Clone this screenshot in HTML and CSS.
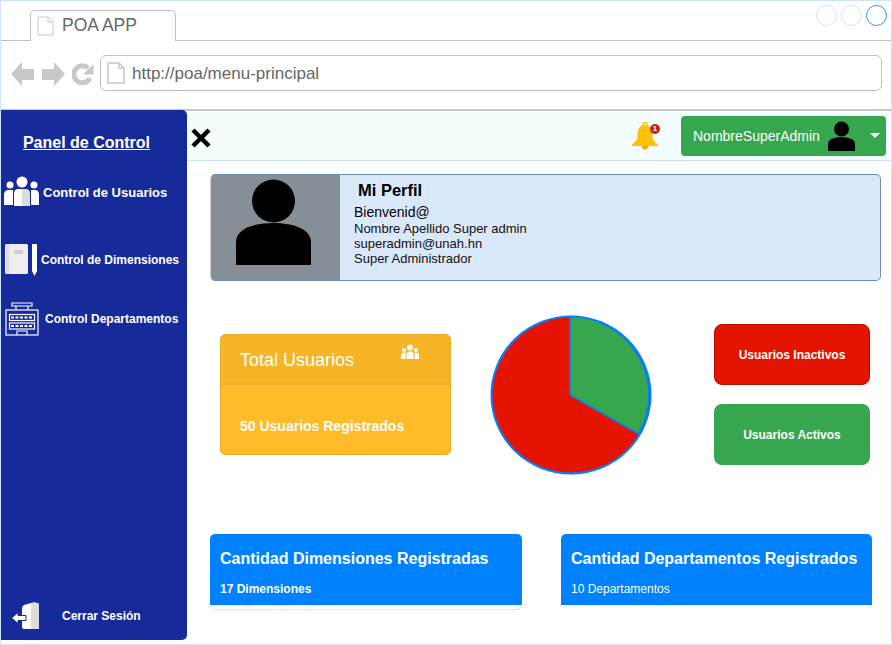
FILE: index.html
```html
<!DOCTYPE html>
<html lang="en">
<head>
<meta charset="UTF-8" />
<meta name="viewport" content="width=device-width, initial-scale=1" />
<title>POA APP</title>
<link rel="stylesheet" href="styles.css">
</head>
<body>
  <div class="window">
    <div class="tabbar">
      <div class="tab">
        <svg class="page-icon" width="17" height="20" viewBox="0 0 17 20"><path d="M1 1H11L16 6V19H1Z M11 1V6H16" fill="#fff" stroke="#c8c8c8" stroke-width="1"/></svg>
        <span>POA APP</span>
      </div>
      <div class="dots">
        <span class="dot"></span>
        <span class="dot"></span>
        <span class="dot dot-on"></span>
      </div>
    </div>
    <div class="addressbar">
      <div class="nav-icons">
        <svg width="24" height="26" viewBox="0 0 24 26"><path d="M0 13L11 1V8H23V19H11V25Z" fill="#c8c8c8"/></svg>
        <svg width="23" height="26" viewBox="0 0 23 26"><path d="M23 13L12 1V8H0V19H12V25Z" fill="#c8c8c8"/></svg>
        <svg width="22" height="24" viewBox="0 0 22 24"><path d="M18 16A8.500 8.500 0 1 1 16 6" fill="none" stroke="#c8c8c8" stroke-width="5"/><path d="M21.500 2V12.500H11Z" fill="#c8c8c8"/></svg>
      </div>
      <div class="urlbox">
        <svg width="18" height="22" viewBox="0 0 18 22"><path d="M1 1H12L17 6V21H1Z M12 1V6H17" fill="#fff" stroke="#c8c8c8" stroke-width="1.500"/></svg>
        <span>http://poa/menu-principal</span>
      </div>
    </div>

    <div class="app">
      <aside class="sidebar">
        <h1 class="side-title">Panel de Control</h1>
        <a class="side-link link-users">
          <svg width="36" height="32" viewBox="0 0 36 32">
            <circle cx="6" cy="9" r="3.500" fill="#fff"/><circle cx="30" cy="9" r="3.500" fill="#fff"/><circle cx="18" cy="6" r="5.500" fill="#fff"/>
            <path d="M0 29V19Q0 14 5 14H9V29Z M27 14H31Q35 14 35 19V29H27Z" fill="#fff"/>
            <path d="M10 30V18Q10 13 14 13H18V30Z" fill="#fff"/><path d="M18 13H22Q26 13 26 18V30H18Z" fill="#dcdcdc"/>
          </svg>
          <span>Control de Usuarios</span>
        </a>
        <a class="side-link link-dims">
          <svg width="36" height="34" viewBox="0 0 36 34">
            <rect x="0" y="1" width="23" height="30" rx="1.500" fill="#eeeeee"/>
            <rect x="1" y="1" width="3" height="30" fill="#dcdcdc"/>
            <rect x="9" y="7" width="9" height="4" fill="#d0d0d0"/>
            <path d="M27 1H32V28L29.500 33L27 28Z" fill="#fff"/>
          </svg>
          <span>Control de Dimensiones</span>
        </a>
        <a class="side-link link-deps">
          <svg width="35" height="34" viewBox="0 0 35 34" fill="none" stroke="#fff" stroke-width="1.200">
            <path d="M7 1H27V4H7Z M11 4V8M23 4V8"/>
            <rect x="1" y="8" width="32" height="25"/>
            <rect x="4.500" y="12.500" width="25" height="6"/>
            <rect x="4.500" y="21" width="25" height="6"/>
            <path d="M6 15.500H28M6 24H28" stroke-width="2" stroke-dasharray="3 1.500"/>
            <path d="M12 33V29H22V33"/>
          </svg>
          <span>Control Departamentos</span>
        </a>
        <a class="side-link side-logout">
          <svg width="28" height="28" viewBox="0 0 28 28">
            <path d="M11 7Q11 4 13 3L20 1Q24 0 26 1Q28 1 28 3V26Q28 27 26 27H14Q11 27 11 25Z" fill="#fff"/>
            <path d="M20 1Q24 0 26 1Q28 1 28 3V27H20Z" fill="#dcdcdc"/>
            <path d="M0.500 16L7 10.500V13.500H15V18.500H7V21.500Z" fill="#fff" stroke="#172a9a" stroke-width="1"/>
          </svg>
          <span>Cerrar Sesión</span>
        </a>
      </aside>

      <main class="content">
        <div class="topbar">
          <svg class="close-icon" width="20" height="20" viewBox="0 0 20 20"><path d="M2 2L18 18M18 2L2 18" stroke="#000" stroke-width="4.500"/></svg>
          <div class="bell">
            <svg width="28" height="30" viewBox="0 0 28 30">
              <circle cx="14" cy="3.500" r="2" fill="none" stroke="#ffc107" stroke-width="1.500"/>
              <path d="M14 4C8 4 6.500 9 6.500 14C6.500 19 4 21 1 23.500V25H27V23.500C24 21 21.500 19 21.500 14C21.500 9 20 4 14 4Z" fill="#ffc107"/>
              <path d="M10.500 25H17.500Q17 28.500 14 28.500Q11 28.500 10.500 25Z" fill="#f5a800"/>
            </svg>
            <span class="bell-badge">1</span>
          </div>
          <div class="user-btn">
            <span>NombreSuperAdmin</span>
            <svg width="27" height="30" viewBox="0 0 27 30"><circle cx="13.500" cy="8" r="7.500"/><path d="M0 30V23C0 18 7 16 13.500 16C20 16 27 18 27 23V30Z"/></svg>
            <span class="caret"></span>
          </div>
        </div>

        <section class="profile">
          <div class="profile-photo">
            <svg width="75" height="86" viewBox="0 0 75 86"><circle cx="37.500" cy="22" r="21.500"/><path d="M0 86V63C0 50 18 44 37.500 44C57 44 75 50 75 63V86Z"/></svg>
          </div>
          <div class="profile-info">
            <h2>Mi Perfil</h2>
            <p class="welcome">Bienvenid@</p>
            <p>Nombre Apellido Super admin</p>
            <p>superadmin@unah.hn</p>
            <p>Super Administrador</p>
          </div>
        </section>

        <section class="stats">
          <div class="total-card">
            <div class="total-head">
              <span>Total Usuarios</span>
              <svg width="18" height="16" viewBox="0 0 18 16" fill="#fff"><circle cx="9" cy="3.500" r="3"/><circle cx="3" cy="6" r="2"/><circle cx="15" cy="6" r="2"/><path d="M0 15V11Q0 8.500 3 8.500H4.500V15Z M18 15V11Q18 8.500 15 8.500H13.500V15Z M5.500 15V10Q5.500 7.500 8 7.500H10Q12.500 7.500 12.500 10V15Z"/></svg>
            </div>
            <div class="total-body">50 Usuarios Registrados</div>
          </div>
          <svg class="pie" width="162" height="160" viewBox="0 0 162 160">
            <ellipse cx="81" cy="80" rx="79.500" ry="78.500" fill="#e51400" stroke="#007fff" stroke-width="2"/>
            <path d="M80 80V1.500A79.500 78.500 0 0 1 148.500 119Z" fill="#36a74e" stroke="#007fff" stroke-width="1.500"/>
          </svg>
          <div class="legend">
            <div class="legend-btn legend-off">Usuarios Inactivos</div>
            <div class="legend-btn legend-on">Usuarios Activos</div>
          </div>
        </section>

        <section class="counts">
          <div class="count-card count-dims">
            <div class="count-fill">
              <h3>Cantidad Dimensiones Registradas</h3>
              <p class="bold">17 Dimensiones</p>
            </div>
          </div>
          <div class="count-card count-deps">
            <div class="count-fill">
              <h3>Cantidad Departamentos Registrados</h3>
              <p>10 Departamentos</p>
            </div>
          </div>
        </section>
      </main>
    </div>
  </div>
</body>
</html>
```

FILE: styles.css
```css
* {
  box-sizing: border-box;
}
html, body {
  margin: 0;
  height: 100%;
  overflow: hidden;
}
body {
  background: #fff;
  font-family: "Liberation Sans", Arial, sans-serif;
}
.window {
  width: 892px;
  height: 645px;
  border: 1px solid #cce4ff;
  display: flex;
  flex-direction: column;
}

/* Browser chrome */
.tabbar {
  height: 40px;
  border-bottom: 1px solid #c0c0c0;
  display: flex;
  justify-content: space-between;
  align-items: flex-start;
  padding: 9px 4px 0 29px;
  flex: none;
}
.tab {
  width: 146px;
  height: 31px;
  background: #fff;
  border: 1px solid #c0c0c0;
  border-bottom: none;
  border-radius: 5px 5px 0 0;
  display: flex;
  align-items: center;
  gap: 8px;
  padding: 0 0 1px 6px;
  font-size: 17.500px;
  color: #666;
}
.dots {
  display: flex;
  gap: 4px;
  margin-top: -5px;
}
.dot {
  width: 21px;
  height: 21px;
  border-radius: 50%;
  border: 1px solid #cce4ff;
}
.dot-on {
  border-color: #1e90ff;
}
.addressbar {
  height: 70px;
  flex: none;
  border-bottom: 2px solid #c8c8c8;
  display: flex;
  align-items: flex-start;
  padding: 14px 9px 0 10px;
}
.nav-icons {
  display: flex;
  align-items: center;
  gap: 7px;
  width: 89px;
  height: 35px;
  padding-top: 3px;
}
.urlbox {
  flex: 1;
  height: 36px;
  border: 1px solid #c0c0c0;
  border-radius: 6px;
  display: flex;
  align-items: center;
  gap: 7px;
  padding-left: 6px;
  font-size: 17px;
  color: #666;
}
.urlbox span {
  padding-top: 2px;
}

/* App area */
.app {
  flex: 1;
  display: flex;
  min-height: 0;
}
.sidebar {
  width: 186px;
  height: 530px;
  margin-top: -1px;
  background: #172a9a;
  border-radius: 0 5px 5px 0;
  color: #fff;
  display: flex;
  flex-direction: column;
  flex: none;
}
.side-title {
  margin: 23px 0 0;
  padding-right: 15px;
  text-align: center;
  font-size: 16px;
  font-weight: 700;
  line-height: 20px;
  text-decoration: underline;
}
.side-link {
  display: flex;
  align-items: center;
  font-weight: 700;
  white-space: nowrap;
}
.link-users {
  margin-top: 23px;
  padding-left: 3px;
  gap: 3px;
  font-size: 13px;
}
.link-dims {
  margin-top: 35px;
  padding-left: 4px;
  font-size: 12px;
}
.link-deps {
  margin-top: 25px;
  padding-left: 4px;
  gap: 5px;
  font-size: 12px;
}
.side-logout {
  margin-top: auto;
  margin-bottom: 10px;
  padding-left: 10px;
  gap: 23px;
  font-size: 12px;
}
.content {
  flex: 1;
  min-width: 0;
}
.topbar {
  height: 50px;
  background: #f5feff;
  border-bottom: 1px solid #cce4ff;
  display: flex;
  align-items: center;
  padding: 0 5px 0 4px;
}
.close-icon {
  margin: 4px auto 0 0;
}
.bell {
  position: relative;
  width: 28px;
  height: 30px;
  margin-right: 22px;
}
.bell-badge {
  position: absolute;
  top: 3px;
  right: -1px;
  width: 10px;
  height: 10px;
  border-radius: 50%;
  background: #c9210d;
  color: #fff;
  font-size: 8px;
  font-weight: 700;
  line-height: 10px;
  text-align: center;
}
.user-btn {
  width: 205px;
  height: 40px;
  background: #36a74e;
  border-radius: 4px;
  display: flex;
  align-items: center;
  padding-left: 12px;
  color: #fff;
  font-size: 14px;
}
.user-btn svg {
  margin-left: 8px;
}
.caret {
  margin-left: 15px;
  border-left: 5px solid transparent;
  border-right: 5px solid transparent;
  border-top: 5px solid #fff;
}

/* Profile */
.profile {
  width: 671px;
  height: 107px;
  margin: 13px 0 0 23px;
  display: flex;
  border: 1px solid #6c8ebf;
  border-left-color: #d0d0d0;
  border-radius: 5px;
  background: #dae8fc;
  overflow: hidden;
}
.profile-photo {
  width: 129px;
  background: #868e96;
  display: flex;
  justify-content: flex-start;
  align-items: flex-start;
  padding: 4px 0 0 25px;
}
.profile-info {
  padding: 6px 0 0 14px;
  font-size: 13px;
  line-height: 15px;
  color: #111;
}
.profile-info h2 {
  margin: 0 0 6px 4px;
  font-size: 16.500px;
  line-height: 18px;
  color: #000;
}
.profile-info p {
  margin: 0;
}
.profile-info .welcome {
  margin-bottom: 1px;
  font-size: 14px;
  color: #000;
}

/* Stats */
.stats {
  display: flex;
  align-items: flex-start;
  margin: 34px 0 0 33px;
}
.total-card {
  width: 231px;
  height: 121px;
  margin-top: 19px;
  border: 1px solid #e6ae26;
  border-radius: 5px;
  background: #ffbb28;
  color: #fff;
  overflow: hidden;
}
.total-head {
  height: 50px;
  background: #f6b526;
  border-bottom: 2px solid #eeb025;
  display: flex;
  justify-content: space-between;
  align-items: flex-start;
  padding: 15px 31px 0 19px;
  font-size: 18px;
  line-height: 21px;
}
.total-head svg {
  margin-top: -6px;
}
.total-body {
  padding: 33px 0 0 19px;
  font-size: 14px;
  font-weight: 700;
}
.pie {
  margin-left: 39px;
  flex: none;
}
.legend {
  margin: 9px 0 0 62px;
  display: flex;
  flex-direction: column;
  gap: 19px;
}
.legend-btn {
  width: 156px;
  height: 61px;
  border-radius: 8px;
  display: flex;
  align-items: center;
  justify-content: center;
  color: #fff;
  font-size: 12px;
  font-weight: 700;
}
.legend-off {
  background: #e51400;
  border: 1px solid #b20f00;
}
.legend-on {
  background: #36a74e;
}

/* Bottom counters */
.counts {
  display: flex;
  gap: 39px;
  margin: 59px 0 0 23px;
  align-items: flex-start;
}
.count-card {
  color: #fff;
  border-radius: 5px 5px 0 0;
  overflow: hidden;
}
.count-dims {
  width: 312px;
  height: 76px;
  border-radius: 5px;
  box-shadow: inset 0 0 0 1px #dfe3e8;
}
.count-deps {
  width: 311px;
  height: 71px;
}
.count-fill {
  height: 71px;
  background: #0082ff;
  padding: 15px 10px 0;
}
.count-fill h3 {
  margin: 0 0 14px;
  font-size: 16px;
  line-height: 19px;
  white-space: nowrap;
}
.count-fill p {
  margin: 0;
  font-size: 12px;
  line-height: 14px;
}
.count-fill .bold {
  font-weight: 700;
}
```
